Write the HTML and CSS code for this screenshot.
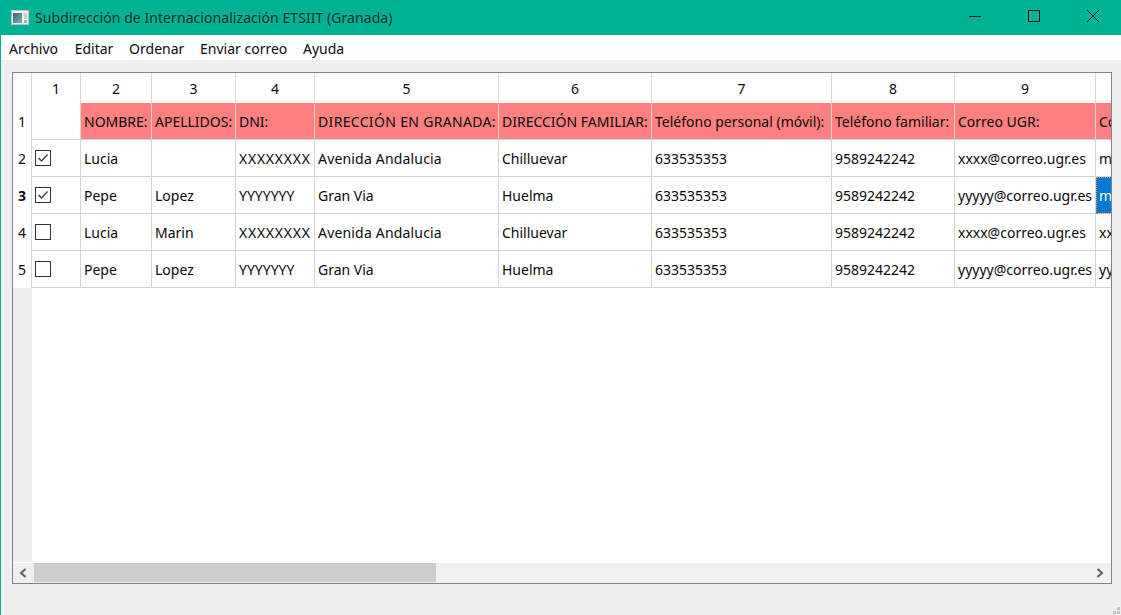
FILE: index.html
```html
<!DOCTYPE html>
<html>
<head>
    <title>Subdirección de Internacionalización ETSIIT (Granada)</title>
    <link rel="stylesheet" href="styles.css">
</head>
<body>

<div class="window">
    <div class="titlebar">
        <svg class="app-icon" width="18" height="15" viewBox="0 0 18 15">
            <defs>
                <linearGradient id="pane" x1="0" y1="0" x2="1" y2="1">
                    <stop offset="0" stop-color="#3d5f78"/>
                    <stop offset="1" stop-color="#7fb5a5"/>
                </linearGradient>
            </defs>
            <rect x="0.5" y="0.5" width="17" height="14" fill="#eef1f0" stroke="#b9c4c2"/>
            <rect x="2" y="3" width="9" height="10" fill="url(#pane)"/>
            <rect x="13" y="3" width="3" height="6" fill="#c9d3d1"/>
            <rect x="13" y="10" width="3" height="3" fill="#79c4b4"/>
        </svg>
        <span class="title">Subdirección de Internacionalización ETSIIT (Granada)</span>
        <div class="controls">
            <svg class="control" width="46" height="35" viewBox="0 0 46 35"><path d="M17 16.5H29" stroke="#111" fill="none"/></svg>
            <svg class="control" width="46" height="35" viewBox="0 0 46 35"><rect x="17.5" y="10.5" width="11" height="11" stroke="#111" fill="none"/></svg>
            <svg class="control" width="46" height="35" viewBox="0 0 46 35"><path d="M17 10L29 22M29 10L17 22" stroke="#111" fill="none"/></svg>
        </div>
    </div>

    <div class="menubar">
        <span class="menu-item">Archivo</span>
        <span class="menu-item">Editar</span>
        <span class="menu-item">Ordenar</span>
        <span class="menu-item">Enviar correo</span>
        <span class="menu-item">Ayuda</span>
    </div>

    <div class="content">
        <div class="frame">
            <div class="viewport">
                <table class="sheet">
                    <colgroup>
                        <col class="col-index">
                        <col class="col-check">
                        <col class="col-name">
                        <col class="col-surname">
                        <col class="col-dni">
                        <col class="col-address">
                        <col class="col-home">
                        <col class="col-mobile">
                        <col class="col-phone">
                        <col class="col-mail">
                        <col class="col-rest">
                    </colgroup>
                    <thead>
                        <tr>
                            <th></th><th>1</th><th>2</th><th>3</th><th>4</th><th>5</th><th>6</th><th>7</th><th>8</th><th>9</th><th></th>
                        </tr>
                    </thead>
                    <tbody>
                        <tr class="heading-row">
                            <th>1</th>
                            <td class="blank"></td>
                            <td>NOMBRE:</td>
                            <td>APELLIDOS:</td>
                            <td>DNI:</td>
                            <td class="spaced">DIRECCIÓN EN GRANADA:</td>
                            <td>DIRECCIÓN FAMILIAR:</td>
                            <td>Teléfono personal (móvil):</td>
                            <td>Teléfono familiar:</td>
                            <td>Correo UGR:</td>
                            <td>Co</td>
                        </tr>
                        <tr>
                            <th>2</th>
                            <td class="check-cell"><span class="box"><svg width="14" height="14" viewBox="0 0 14 14"><path d="M2.5 7L5.5 10L11.5 3.5" stroke="#444" stroke-width="1.5" fill="none"/></svg></span></td>
                            <td>Lucia</td>
                            <td></td>
                            <td class="id-x">XXXXXXXX</td>
                            <td class="street">Avenida Andalucia</td>
                            <td>Chilluevar</td>
                            <td>633535353</td>
                            <td>9589242242</td>
                            <td>xxxx@correo.ugr.es</td>
                            <td>m</td>
                        </tr>
                        <tr>
                            <th class="current">3</th>
                            <td class="check-cell"><span class="box"><svg width="14" height="14" viewBox="0 0 14 14"><path d="M2.5 7L5.5 10L11.5 3.5" stroke="#444" stroke-width="1.5" fill="none"/></svg></span></td>
                            <td>Pepe</td>
                            <td>Lopez</td>
                            <td>YYYYYYY</td>
                            <td>Gran Via</td>
                            <td>Huelma</td>
                            <td>633535353</td>
                            <td>9589242242</td>
                            <td>yyyyy@correo.ugr.es</td>
                            <td class="selected">m</td>
                        </tr>
                        <tr>
                            <th>4</th>
                            <td class="check-cell"><span class="box"></span></td>
                            <td>Lucia</td>
                            <td>Marin</td>
                            <td class="id-x">XXXXXXXX</td>
                            <td class="street">Avenida Andalucia</td>
                            <td>Chilluevar</td>
                            <td>633535353</td>
                            <td>9589242242</td>
                            <td>xxxx@correo.ugr.es</td>
                            <td>xx</td>
                        </tr>
                        <tr>
                            <th>5</th>
                            <td class="check-cell"><span class="box"></span></td>
                            <td>Pepe</td>
                            <td>Lopez</td>
                            <td>YYYYYYY</td>
                            <td>Gran Via</td>
                            <td>Huelma</td>
                            <td>633535353</td>
                            <td>9589242242</td>
                            <td>yyyyy@correo.ugr.es</td>
                            <td>yy</td>
                        </tr>
                    </tbody>
                </table>
            </div>
            <div class="scrollbar">
                <div class="arrow">
                    <svg width="8" height="10" viewBox="0 0 8 10"><path d="M6.5 1L2 5L6.5 9" stroke="#606060" stroke-width="2" fill="none"/></svg>
                </div>
                <div class="track"><div class="thumb"></div></div>
                <div class="arrow">
                    <svg width="8" height="10" viewBox="0 0 8 10"><path d="M1.5 1L6 5L1.5 9" stroke="#606060" stroke-width="2" fill="none"/></svg>
                </div>
            </div>
        </div>
        <div class="statusbar">
            <svg width="8" height="8" viewBox="0 0 8 8" fill="#c4c4c4">
                <rect x="4" y="0" width="3" height="3"/>
                <rect x="0" y="4" width="3" height="3"/>
                <rect x="4" y="4" width="3" height="3"/>
            </svg>
        </div>
    </div>
</div>

</body>
</html>
```

FILE: styles.css
```css
html, body {
    margin: 0;
    height: 100%;
    overflow: hidden;
}

body {
    font-family: "Noto Sans", "Open Sans", sans-serif;
    font-size: 14px;
    color: #0a0a0a;
}

.window {
    height: 615px;
    display: flex;
    flex-direction: column;
    border-left: 1px solid #00b294;
    background-color: #efefef;
}

.titlebar {
    height: 35px;
    flex: none;
    display: flex;
    align-items: center;
    background-color: #00b294;
    padding-left: 10px;
}

.app-icon {
    margin-right: 6px;
}

.title {
    flex: 1;
    color: #0c2f2a;
    letter-spacing: 0.06px;
}

.controls {
    display: flex;
    margin-right: 5px;
}

.control {
    display: block;
    margin-left: 13px;
}

.menubar {
    height: 25px;
    box-sizing: border-box;
    padding: 2px 0 0 8px;
    flex: none;
    display: flex;
    align-items: center;
    gap: 15.7px;
    background-color: white;
}

.menu-item:first-child {
    margin-right: 1px;
}

.content {
    flex: 1;
    display: flex;
    flex-direction: column;
    padding: 12px 9px 0 11px;
}

.frame {
    height: 510px;
    flex: none;
    display: flex;
    flex-direction: column;
    border: 1px solid #83838f;
    overflow: hidden;
}

.viewport {
    flex: 1;
    overflow: hidden;
    background: linear-gradient(#efefef, #efefef) left top / 19px 489px no-repeat white;
}

.sheet {
    table-layout: fixed;
    width: 1283px;
    border-collapse: separate;
    border-spacing: 0;
    background-color: white;
}

.col-index { width: 19px; }
.col-check { width: 49px; }
.col-name { width: 71px; }
.col-surname { width: 84px; }
.col-dni { width: 79px; }
.col-address { width: 184px; }
.col-home { width: 153px; }
.col-mobile { width: 180px; }
.col-phone { width: 123px; }
.col-mail { width: 141px; }
.col-rest { width: 200px; }

.sheet th {
    padding: 0;
    font-weight: normal;
    text-align: center;
    box-sizing: border-box;
}

.sheet thead th {
    height: 30px;
    border-right: 1px solid #d9d9d9;
}

.sheet tbody th {
    height: 37px;
    border-right: 1px solid #d9d9d9;
}

.sheet th.current {
    font-weight: bold;
}

.sheet td {
    height: 37px;
    box-sizing: border-box;
    padding: 0 0 0 3px;
    border-right: 1px solid #d4d4d4;
    border-bottom: 1px solid #d4d4d4;
    white-space: nowrap;
    overflow: hidden;
}

.heading-row td {
    background-color: #ff8080;
}

.heading-row td.blank {
    background-color: white;
}

.sheet td.spaced {
    letter-spacing: 0.33px;
}

.sheet td.id-x {
    letter-spacing: 0.75px;
}

.sheet td.street {
    letter-spacing: 0.18px;
}

.check-cell .box {
    display: block;
    width: 14px;
    height: 14px;
    border: 1px solid #333;
}

.box svg {
    display: block;
}

.sheet td.selected {
    background-color: #0078d7;
    color: white;
    outline: 1px dotted #ff8a1e;
    outline-offset: -1px;
}

.scrollbar {
    height: 20px;
    flex: none;
    display: flex;
    background-color: #f0f0f0;
}

.arrow {
    width: 21px;
    box-sizing: border-box;
    padding-right: 2px;
    flex: none;
    display: flex;
    align-items: center;
    justify-content: center;
}

.track {
    flex: 1;
}

.thumb {
    width: 402px;
    height: 19px;
    background-color: #cdcdcd;
}

.statusbar {
    flex: 1;
    display: flex;
    justify-content: flex-end;
    align-items: flex-end;
    margin-right: -9px;
}

.statusbar svg {
    display: block;
}
```
